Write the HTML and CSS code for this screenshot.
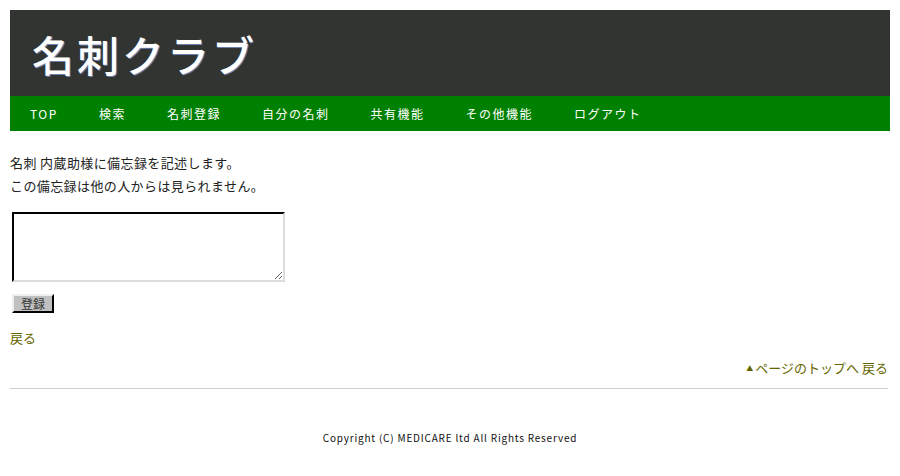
FILE: index.html
```html
<!DOCTYPE html>
<html lang="ja">
<head>
    <meta charset="UTF-8">
    <title>名刺クラブ</title>
    <link rel="stylesheet" href="styles.css">
</head>
<body>
    <div class="wrap">
        <header>
            <div class="site-title">名刺クラブ</div>
        </header>
        <nav class="gnav">
            <a href="#">TOP</a>
            <a href="#">検索</a>
            <a href="#">名刺登録</a>
            <a href="#">自分の名刺</a>
            <a href="#">共有機能</a>
            <a href="#">その他機能</a>
            <a href="#">ログアウト</a>
        </nav>

        <main>
            <p class="lead">名刺 内蔵助様に備忘録を記述します。<br>この備忘録は他の人からは見られません。</p>
            <form class="memo-form">
                <textarea class="memo"></textarea>
                <button type="button" class="btn">登録</button>
            </form>
            <p class="back"><a href="#">戻る</a></p>
            <p class="pagetop"><a href="#"><span class="arrow">▲</span>ページのトップへ 戻る</a></p>
        </main>

        <footer>
            Copyright (C) MEDICARE ltd All Rights Reserved
        </footer>
    </div>
</body>
</html>
```

FILE: styles.css
```css
body {
    margin: 0;
    padding: 0;
    background-color: #fff;
    font-family: "Noto Sans CJK JP", "DejaVu Sans", sans-serif;
    font-size: 13px;
    line-height: 16px;
    color: #222;
}
.wrap {
    margin: 10px;
}
header {
    background-color: #323432;
    height: 86px;
    padding: 0 0 0 22px;
    display: flex;
    align-items: center;
}
.site-title {
    color: #fff;
    font-size: 42px;
    font-weight: 500;
    letter-spacing: 3px;
    line-height: 1;
    margin-top: 2px;
    text-shadow: 1px 1px 0 #6b7fb0;
}
.gnav {
    background-color: #008000;
    height: 35px;
    display: flex;
    align-items: center;
    padding-left: 20px;
}
.gnav a {
    color: #fff;
    text-decoration: none;
    font-size: 12px;
    letter-spacing: 1.5px;
    margin-right: 41px;
}
main {
    padding-top: 20px;
}
.lead {
    margin: 0;
    line-height: 23px;
    letter-spacing: 0.4px;
}
.memo-form {
    margin-top: 15px;
}
.memo {
    display: block;
    width: 269px;
    height: 66px;
    margin: 0 0 0 2px;
    border: 2px inset #ddd;
    border-top-color: #222;
    border-left-color: #222;
    padding: 0;
    resize: both;
}
.btn {
    display: block;
    margin: 12px 0 0 2px;
    width: 42px;
    height: 19px;
    padding: 0;
    font-family: inherit;
    font-size: 12px;
    line-height: 15px;
    color: #333;
    background-color: #c0c0c0;
    border: 2px outset #eee;
    border-right-color: #111;
    border-bottom-color: #111;
}
.back {
    margin: 17px 0 0;
}
a {
    color: #666600;
    text-decoration: none;
}
.pagetop {
    margin: 14px 2px 0 0;
    text-align: right;
    padding-bottom: 12px;
    border-bottom: 1px solid #ccc;
}
.arrow {
    font-size: 7px;
    vertical-align: 2px;
    margin-right: 2px;
}
footer {
    text-align: center;
    font-size: 10px;
    line-height: 14px;
    color: #111;
    padding-top: 42px;
    letter-spacing: 0.8px;
}
```
